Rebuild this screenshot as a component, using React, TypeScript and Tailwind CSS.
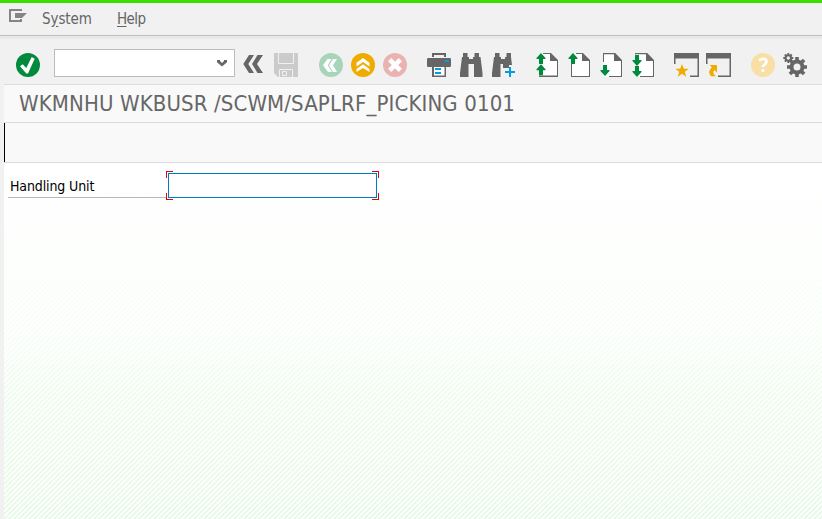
import type { ReactNode } from "react";

type IconProps = { x: number; y?: number; w?: number; h?: number; className?: string; children: ReactNode };

// Toolbar glyphs are drawn on the toolbar's own grid; x and y pick the part shown.
function Icon({ x, y = 53, w = 24, h = 24, className = "", children }: IconProps) {
  return (
    <svg className={"block shrink-0 " + className} width={w} height={h} viewBox={`${x} ${y} ${w} ${h}`}>
      {children}
    </svg>
  );
}

const G = "#666666";
const ARROW_UP = "M0 5L4.5 0L9 5V6H6.5V11H2.5V6H0Z";
const ARROW_DOWN = "M0 6L4.5 11L9 6V5H6.5V0H2.5V5H0Z";

function Toolbar() {
  return (
    <div className="flex h-[46px] shrink-0 items-center border-b border-[#dcdcdc] bg-[#f1f1f1] pt-[7px] pl-3">
      <Icon x={16}>
        <circle cx="28" cy="65" r="12" fill="#008a3b" />
        <path d="M20 66.3L22.7 64.3L26.3 68L31.7 57L34.7 58.7L28 73.6H26.3Z" fill="#fff" />
      </Icon>
      <div className="mb-1 ml-3.5 flex h-7 w-[181px] items-center justify-end border border-[#bcbcbc] bg-white pr-[6px]">
        <Icon x={216} y={59} w={12} h={8}>
          <path d="M217 60H220V61L222 63L224 61V60H227V62.3L222 66.5L217 62.3Z" fill={G} />
        </Icon>
      </div>
      <Icon x={242} className="ml-[7px]">
        <path d="M243.3 64L249 55H254L248.3 64L254 73H249Z M252 64L257.5 55H263L257 64L263 73H257.5Z" fill={G} />
      </Icon>
      <Icon x={274} className="ml-2">
        <path d="M274 53H298V77H278L274 73Z" fill="#cbcbcb" />
        <path d="M278.5 53V63.5H293.5V53M279.5 77V69.5H292.5V77" fill="none" stroke="#f1f1f1" strokeWidth="1" />
        <path d="M282.5 71.5H286.5V75.5H282.5Z" fill="none" stroke="#f1f1f1" strokeWidth="1" />
      </Icon>
      <Icon x={319} className="ml-[21px]">
        <circle cx="331" cy="65" r="12" fill="#a8d5ba" />
        <path d="M323 65.3L327.5 59H331.5L327.7 65.3L332 72H328Z M329 65.3L333 59H337L333 65.3L337 72H333Z" fill="#fff" />
      </Icon>
      <Icon x={351} className="ml-2">
        <circle cx="363" cy="65" r="12" fill="#f0ab00" />
        <path d="M363 58L369.5 62.7V66.5L363 62L356.5 66.5V62.7Z M363 64.3L369.5 69V72L363 68L356.5 72V69Z" fill="#fff" />
      </Icon>
      <Icon x={383} className="ml-2">
        <circle cx="395" cy="65" r="12" fill="#ebb2b2" />
        <path d="M389.7 59.7L400.3 70.3M400.3 59.7L389.7 70.3" stroke="#fff" strokeWidth="4.6" />
      </Icon>
      <Icon x={427} className="ml-5">
        <path d="M433 57V54H445V57" fill="none" stroke={G} strokeWidth="2" />
        <rect x="427" y="58" width="24" height="9" rx="1.3" fill={G} />
        <rect x="445" y="60" width="4" height="2" fill="#009de0" />
        <path d="M432 65H446V77H432Z" fill={G} />
        <path d="M434 67H444.5V75.5H434Z" fill="#fff" />
        <path d="M435 68H441V70H435ZM435 72H441V74H435Z" fill="#009de0" />
      </Icon>
      <Icon x={459} className="ml-2">
        <path d="M463 53H467.5V57H469V59H473V57H474.5V53H479V57H480.5L482.5 73V77H474V64H468.5V77H460V73L462 57H463Z" fill={G} />
      </Icon>
      <Icon x={491} w={26} className="ml-2">
        <path d="M495 53H499.5V57H501V59H505V57H506.5V53H511V57L512 65H509V68H503V64H500.5V77H492V73L494 57H495Z" fill={G} />
        <path d="M509 67H511V71H515V73H511V77H509V73H505V71H509Z" fill="#009de0" />
      </Icon>
      <Icon x={536} className="ml-[19px]">
        <path d="M540 53H551L558 60V77H540Z" fill="#fff" />
        <path d="M543 53H551L558 60V77H539V75.5H557V61H550V54H543Z" fill={G} />
        <path d={ARROW_UP} transform="translate(536.5 53)" fill="#008a3b" />
        <path d={ARROW_UP} transform="translate(536.5 64.3)" fill="#008a3b" />
      </Icon>
      <Icon x={568} className="ml-2">
        <path d="M572 54H583L590 61V77H571V63Z" fill="#fff" />
        <path d="M576 53H583L590 60V77H571V64H572V76H589V61H582V54H576Z" fill={G} />
        <path d={ARROW_UP} transform="translate(568.5 53)" fill="#008a3b" />
      </Icon>
      <Icon x={600} className="ml-2">
        <path d="M603 53H615L622 60V77H603Z" fill="#fff" />
        <path d="M603 62V52.8H615L622 60V77H609V76H621V61H614V54.3H604V62Z" fill={G} />
        <path d={ARROW_DOWN} transform="translate(600.5 65)" fill="#008a3b" />
      </Icon>
      <Icon x={632} className="ml-2">
        <path d="M636 53H647L654 60V77H636Z" fill="#fff" />
        <path d="M635 52.8H647L654 60V77H640V76H653V61H646V54.3H635Z" fill={G} />
        <path d={ARROW_DOWN} transform="translate(632.5 55)" fill="#008a3b" />
        <path d={ARROW_DOWN} transform="translate(632.5 66)" fill="#008a3b" />
      </Icon>
      <Icon x={674} w={26} className="ml-[18px]">
        <path d="M674 53H699V77H690V75.5H697.5V58.5H675.5V64H674Z" fill={G} />
        <path d="M682 64L683.8 68.8H688.7L684.8 71.8L686.2 76.7L682 73.7L677.8 76.7L679.2 71.8L675.3 68.8H680.2Z" fill="#f0ab00" />
      </Icon>
      <Icon x={706} w={26} className="ml-1.5">
        <path d="M706 53H731V77H718V75.5H729.5V58.5H707.5V64H706Z" fill={G} />
        <path d="M709.5 65H717V72.5L714.5 70Q711.5 73 716 76.3H711Q707 71.5 711.8 67.3Z" fill="#f0ab00" />
      </Icon>
      <Icon x={751} className="ml-[19px]">
        <circle cx="763" cy="65" r="12" fill="#f7dfa5" />
        <path d="M759 60.5Q763 57.8 765.5 59.5Q767.7 61.5 765 64.3L763 66V67.3" fill="none" stroke="#fff" strokeWidth="2.7" />
        <rect x="761.4" y="69" width="3" height="3" rx="1" fill="#fff" />
      </Icon>
      <Icon x={783} w={26} className="ml-2">
        <g fill="none" stroke={G}>
          <circle cx="797" cy="67" r="5.5" strokeWidth="4" />
          <path d="M797 57V61M797 73V77M787 67H791M803 67H807M789.9 59.9L793 63M801 71L804.1 74.1M804.1 59.9L801 63M793 71L789.9 74.1" strokeWidth="3.6" />
          <circle cx="788.3" cy="58" r="2.7" strokeWidth="2" />
          <path d="M788.3 53V55.5M788.3 60.5V63M783.3 58H785.8M790.8 58H793.3M784.8 54.5L786.5 56.2M790 59.8L791.8 61.5M791.8 54.5L790 56.2M786.5 59.8L784.8 61.5" strokeWidth="1.8" />
        </g>
      </Icon>
    </div>
  );
}

export default function App() {
  return (
    <div className="flex h-[519px] w-[822px] flex-col overflow-hidden bg-[#f1f1f1] font-['DejaVu_Sans_Condensed','DejaVu_Sans',sans-serif] [font-stretch:condensed]">
      <div className="h-[3px] shrink-0 bg-[#38e000]" />
      <nav className="flex h-[33px] shrink-0 items-center border-b border-[#bfbfbf] pl-2 text-[15px] text-[#666]">
        <Icon x={8} y={8} w={20} h={16} className="-mt-1.5">
          <path d="M21 11V10H10V21H21V19" fill="none" stroke="#858585" strokeWidth="2" />
          <path d="M15 13H27L22 18H15Z" fill="#858585" />
        </Icon>
        <span className="ml-3.5 w-[75px] tracking-[-0.1px]">S<u className="underline-offset-2">y</u>stem</span>
        <span className="tracking-[-0.6px]"><u className="underline-offset-2">H</u>elp</span>
      </nav>
      <div className="h-[3px] shrink-0 bg-[#e8e8e8]" />
      <main className="flex grow flex-col pl-1">
        <Toolbar />
        <h1 className="flex h-[38px] shrink-0 items-center border-b border-[#dcdcdc] bg-[#f9f9f9] pb-px pl-[15px] text-[22px] tracking-[0.12px] whitespace-nowrap text-[#666]">
          WKMNHU WKBUSR /SCWM/SAPLRF_PICKING 0101
        </h1>
        <div className="h-10 shrink-0 border-b border-[#dcdcdc] bg-[#f9f9f9]">
          <div className="h-[39px] w-px bg-black" />
        </div>
        <section className="grow bg-[linear-gradient(to_bottom,#fffffffc_0%,#ffffffe0_30%,#ffffffc0_54%,#ffffff98_58%,#ffffff50_100%),linear-gradient(135deg,#e0f8df_25%,#fff_25%,#fff_50%,#e0f8df_50%,#e0f8df_75%,#fff_75%)] bg-size-[auto,5px_5px] pt-2 pl-1">
          <div className="flex">
            <label htmlFor="unit" className="mt-[2px] flex h-[25px] w-[158px] items-center border-b border-[#b7b7b7] pt-0.5 pl-0.5 text-[14px] tracking-[-0.12px] text-black">
              Handling Unit
            </label>
            <div className="relative h-[29px] w-[213px] p-0.5">
              <input id="unit" className="block h-[25px] w-[209px] border border-[#007cc0] bg-white outline-none" />
              <i className="absolute top-0 left-0 size-[7px] border-t border-l border-[#d20a11]" />
              <i className="absolute top-0 right-0 size-[7px] border-t border-r border-[#d20a11]" />
              <i className="absolute bottom-0 left-0 size-[7px] border-b border-l border-[#d20a11]" />
              <i className="absolute right-0 bottom-0 size-[7px] border-r border-b border-[#d20a11]" />
            </div>
          </div>
        </section>
      </main>
    </div>
  );
}
